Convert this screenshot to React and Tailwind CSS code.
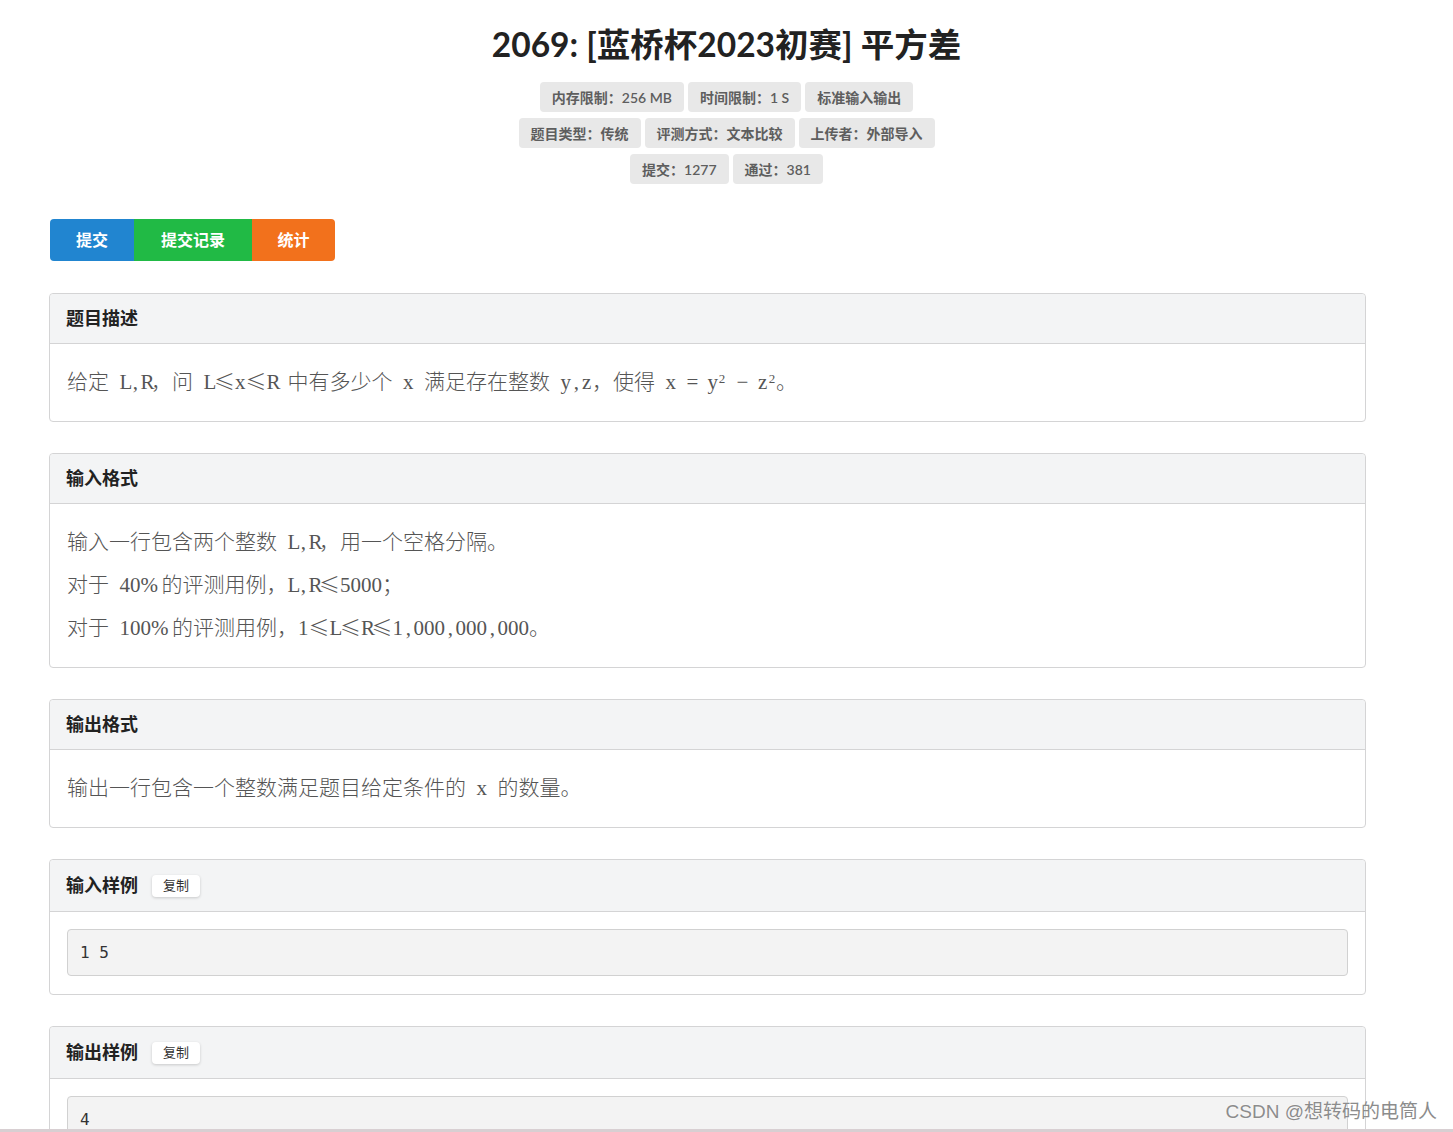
import React from "react";

const sans = { fontFamily: "Lato, 'Noto Sans CJK SC', sans-serif" };
const serif = { fontFamily: "'Liberation Serif', serif" };

const metas = [
  ["内存限制：256 MB", "时间限制：1 S", "标准输入输出"],
  ["题目类型：传统", "评测方式：文本比较", "上传者：外部导入"],
  ["提交：1277", "通过：381"],
];

// half-width latin cells, like the SimSun text of the original
const M = ({ t }) => (
  <span style={serif}>
    {[...t].map((c, i) => (
      <span key={i} className="inline-block w-[10.5px] text-center">
        {c === " " ? "\u00a0" : c}
      </span>
    ))}
  </span>
);

const Le = () => <span className="inline-block w-[21px] text-center">≤</span>;

const Sup = () => (
  <sup className="inline-block w-[8px] text-[13px] text-center" style={serif}>
    2
  </sup>
);

const Panel = ({ title, copy, children }) => (
  <div className="w-[1317px] rounded-[4px] border border-[#d4d4d5] bg-white">
    <div
      className={`flex items-center px-[16px] bg-[#f3f4f5] border-b border-[#d4d4d5] rounded-t-[4px] ${
        copy ? "h-[52px]" : "h-[50px]"
      }`}
    >
      <span className="text-[18px] font-bold text-[#222]">{title}</span>
      {copy && (
        <span className="ml-[14px] h-[22px] px-[11px] flex items-center rounded-[4px] bg-white text-[13px] text-[#333] shadow-[0_1px_3px_rgba(0,0,0,0.18)]">
          复制
        </span>
      )}
    </div>
    {children}
  </div>
);

const Text = ({ lines }) => (
  <div
    className="px-[17px] pt-[15px] pb-[19px] text-[21px] leading-[43px] text-[#555]"
    style={{ fontFamily: "'Noto Sans CJK SC', serif" }}
  >
    {lines.map((l, i) => (
      <div key={i} className="h-[43px] font-light whitespace-nowrap">
        {l}
      </div>
    ))}
  </div>
);

const Code = ({ value }) => (
  <div className="px-[17px] pt-[17px] pb-[18px]">
    <div
      className="rounded-[4px] border border-[#d1d1d1] bg-[#f3f3f3] px-[12px] py-[13px] text-[16px] leading-[19px] text-[#333]"
      style={{ fontFamily: "'DejaVu Sans Mono', monospace" }}
    >
      {value}
    </div>
  </div>
);

export default function App() {
  return (
    <div className="relative h-[1132px] overflow-hidden bg-white" style={sans}>
      <div className="pl-[49px] pt-[21px]">
        <div className="w-[1355px] flex flex-col items-center">
          <h1 className="text-[33.5px] leading-[46px] font-bold text-[#222]">
            2069: [蓝桥杯2023初赛] 平方差
          </h1>
          <div className="mt-[15px] flex flex-col items-center gap-[6px]">
            {metas.map((row, i) => (
              <div key={i} className="flex gap-[4px]">
                {row.map((m) => (
                  <span
                    key={m}
                    className="h-[30px] px-[12px] flex items-center rounded-[4px] bg-[#e8e8e8] text-[14px] font-semibold text-[#5e5e5e]"
                  >
                    {m}
                  </span>
                ))}
              </div>
            ))}
          </div>
        </div>

        <div className="mt-[35px] ml-[1px] flex h-[42px] w-fit rounded-[4px] overflow-hidden text-[16px] font-bold text-white">
          <span className="w-[84px] flex items-center justify-center bg-[#2185d0]">提交</span>
          <span className="w-[118px] flex items-center justify-center bg-[#21ba45]">提交记录</span>
          <span className="w-[83px] flex items-center justify-center bg-[#f2711c]">统计</span>
        </div>

        <div className="mt-[32px] flex flex-col gap-[31px]">
          <Panel title="题目描述">
            <Text
              lines={[
                <>
                  给定<M t=" L,R" />，问<M t=" L" />
                  <Le />
                  <M t="x" />
                  <Le />
                  <M t="R " />中有多少个<M t=" x " />满足存在整数<M t=" y,z" />，使得
                  <M t=" x = y" />
                  <Sup />
                  <M t=" − z" />
                  <Sup />。
                </>,
              ]}
            />
          </Panel>
          <Panel title="输入格式">
            <Text
              lines={[
                <>
                  输入一行包含两个整数<M t=" L,R" />，用一个空格分隔。
                </>,
                <>
                  对于<M t=" 40% " />的评测用例，<M t="L,R" />
                  <Le />
                  <M t="5000" />；
                </>,
                <>
                  对于<M t=" 100% " />的评测用例，<M t="1" />
                  <Le />
                  <M t="L" />
                  <Le />
                  <M t="R" />
                  <Le />
                  <M t="1,000,000,000" />。
                </>,
              ]}
            />
          </Panel>
          <Panel title="输出格式">
            <Text
              lines={[
                <>
                  输出一行包含一个整数满足题目给定条件的<M t=" x " />的数量。
                </>,
              ]}
            />
          </Panel>
          <Panel title="输入样例" copy>
            <Code value="1 5" />
          </Panel>
          <Panel title="输出样例" copy>
            <Code value="4" />
          </Panel>
        </div>
      </div>

      <div
        className="absolute right-[16px] bottom-[6px] text-[19px] text-[#8c8c8c] [text-shadow:0_0_2px_#fff]"
        style={{ fontFamily: "'Liberation Sans', 'Noto Sans CJK SC', sans-serif" }}
      >
        CSDN @想转码的电筒人
      </div>
      <div className="absolute left-0 right-0 bottom-0 h-[3px] bg-[#d8cfd2]" />
    </div>
  );
}
